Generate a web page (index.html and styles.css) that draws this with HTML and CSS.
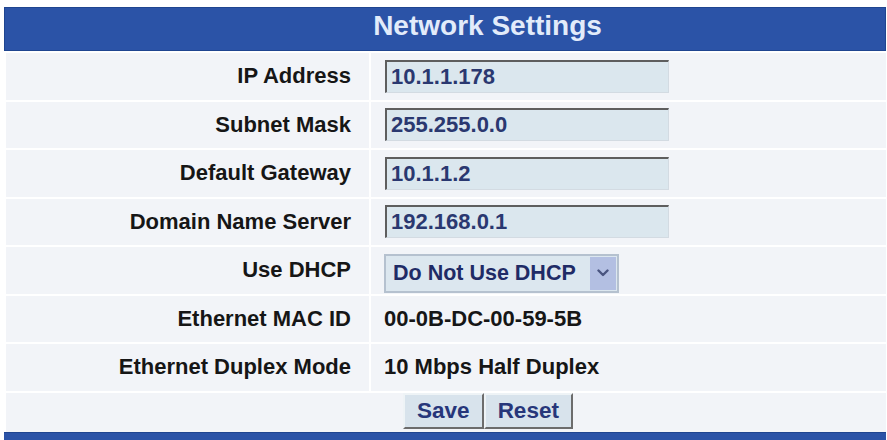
FILE: index.html
```html
<!DOCTYPE html>
<html>
<head>
<meta charset="utf-8">
<title>Network Settings</title>
<link rel="stylesheet" href="styles.css">
</head>
<body>
<div class="panel">
  <div class="title">Network Settings</div>
  <div class="rows">
    <div class="label">IP Address</div>
    <div class="value"><input class="field" type="text" value="10.1.1.178"></div>

    <div class="label">Subnet Mask</div>
    <div class="value"><input class="field" type="text" value="255.255.0.0"></div>

    <div class="label">Default Gateway</div>
    <div class="value"><input class="field" type="text" value="10.1.1.2"></div>

    <div class="label">Domain Name Server</div>
    <div class="value"><input class="field" type="text" value="192.168.0.1"></div>

    <div class="label">Use DHCP</div>
    <div class="value">
      <div class="select">
        <span class="select-text">Do Not Use DHCP</span>
        <span class="select-arrow">
          <svg width="12" height="8" viewBox="0 0 12 8"><path d="M1.5 1.5 L6 6 L10.5 1.5" fill="none" stroke="#4a5580" stroke-width="2.4" stroke-linecap="round" stroke-linejoin="round"/></svg>
        </span>
      </div>
    </div>

    <div class="label">Ethernet MAC ID</div>
    <div class="value">00-0B-DC-00-59-5B</div>

    <div class="label">Ethernet Duplex Mode</div>
    <div class="value">10 Mbps Half Duplex</div>

    <div class="actions">
      <button class="btn" type="button">Save</button><button class="btn" type="button">Reset</button>
    </div>
  </div>
  <div class="footer-bar"></div>
</div>
</body>
</html>
```

FILE: styles.css
```css
html, body {
  margin: 0;
  padding: 0;
  background: #ffffff;
}

body {
  font-family: "Liberation Sans", Arial, sans-serif;
  font-weight: bold;
  font-size: 22px;
  color: #161616;
}

.panel {
  margin: 7px 1px 0 4px;
  width: 882px;
}

.title {
  background: #2b53a7;
  border: 1px solid #1f4590;
  color: #e2ebfa;
  font-size: 28px;
  line-height: 35px;
  height: 35px;
  padding: 0 0 7px 85px;
  text-align: center;
}

.rows {
  display: grid;
  grid-template-columns: 363px 1fr;
  grid-template-rows: repeat(7, 46.5px) 39.5px;
  gap: 2px;
  margin: 2px 0 0 2px;
}

.label,
.value,
.actions {
  background: #f2f4f8;
  display: flex;
  align-items: center;
}

.label {
  justify-content: flex-end;
  padding-right: 18px;
  white-space: nowrap;
}

.value {
  padding-left: 13px;
  white-space: nowrap;
}

.field {
  box-sizing: border-box;
  width: 284px;
  height: 33px;
  margin: 0 0 0 1px;
  padding: 0 4px;
  border-top: 2px solid #5e5e5e;
  border-left: 2px solid #5e5e5e;
  border-right: 1px solid #d3dbe2;
  border-bottom: 1px solid #d3dbe2;
  background: #dbe7ee;
  color: #2a3870;
  font-family: inherit;
  font-weight: bold;
  font-size: 22px;
  outline: none;
}

.select {
  box-sizing: border-box;
  width: 235px;
  height: 39px;
  margin-top: 6px;
  border: 2px solid #b5c1cf;
  background: #dce7ef;
  display: flex;
  align-items: center;
  padding: 0 1px 0 7px;
  color: #1f2b66;
  font-size: 21.5px;
}

.select-arrow {
  margin-left: auto;
  width: 26px;
  height: 33px;
  background: #b3bfe2;
  display: flex;
  align-items: center;
  justify-content: center;
}

.actions {
  grid-column: 1 / -1;
  align-items: flex-start;
  justify-content: center;
  padding-left: 84px;
}

.btn {
  box-sizing: border-box;
  height: 36px;
  margin: 0;
  padding: 0 12px;
  background: #d8e3ec;
  border-style: solid;
  border-width: 2px;
  border-color: #eef3f6 #6c6c6c #6c6c6c #eef3f6;
  color: #27367a;
  font-family: inherit;
  font-weight: bold;
  font-size: 22.5px;
}

.footer-bar {
  height: 8px;
  background: #2b53a7;
  border-top: 1px solid #1f4590;
}
```
